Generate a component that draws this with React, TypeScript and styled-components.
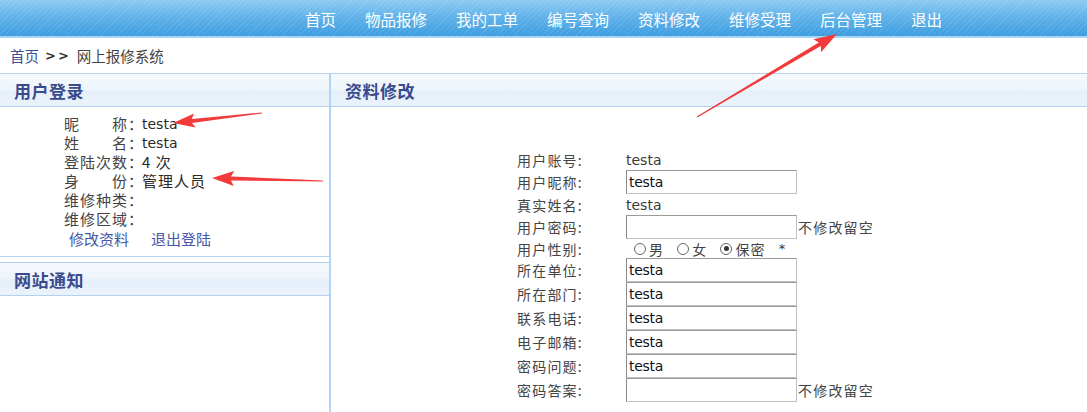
import React from "react";
import styled, { createGlobalStyle } from "styled-components";

type Point = [number, number];

const GlobalStyle = createGlobalStyle`
  html, body {
    margin: 0;
    padding: 0;
    background: #fff;
  }
  body {
    font-family: "Noto Sans CJK SC", "Noto Sans", sans-serif;
    font-size: 14px;
    color: #444;
  }
`;

const Page = styled.div`
  position: relative;
  width: 1087px;
  height: 412px;
  overflow: hidden;
`;

const NavBar = styled.div`
  height: 38px;
  box-sizing: border-box;
  border-bottom: 2px solid #a6d6f4;
  background:
    repeating-linear-gradient(
      135deg,
      rgba(255, 255, 255, 0.09) 0px,
      rgba(255, 255, 255, 0.09) 1px,
      rgba(255, 255, 255, 0) 1px,
      rgba(255, 255, 255, 0) 4px
    ),
    linear-gradient(#8ccbf2 0%, #62b3ea 45%, #3d9de0 100%);
  display: flex;
  align-items: center;
  padding-left: 305px;
  gap: 29px;
`;

const NavItem = styled.a`
  color: #fff;
  font-size: 15.5px;
  line-height: 20px;
  text-decoration: none;
  padding-top: 2px;
`;

const Crumb = styled.div`
  height: 35px;
  display: flex;
  align-items: center;
  padding-left: 10px;
  font-size: 14.5px;
  color: #444;
  gap: 6px;
`;

const CrumbLink = styled.span`
  color: #3b4c92;
`;

const CrumbSep = styled.span`
  font-family: "DejaVu Sans", sans-serif;
  font-weight: bold;
  font-size: 13px;
  color: #333;
  letter-spacing: 2px;
`;

const Main = styled.div`
  display: flex;
  height: 339px;
`;

const Side = styled.div`
  width: 329px;
  flex-shrink: 0;
  border-right: 2px solid #b4d4f3;
`;

const Content = styled.div`
  flex: 1;
`;

const Panel = styled.div<{ $spaced?: boolean }>`
  margin-top: ${(p) => (p.$spaced ? "5px" : "0")};
`;

const PanelHead = styled.div`
  height: 34px;
  box-sizing: border-box;
  border-top: 1px solid #b5d1ee;
  border-bottom: 1px solid #b5d1ee;
  background: linear-gradient(#f5f9fd 0%, #eff5fc 50%, #e6f0fa 52%, #eaf2fb 100%);
  display: flex;
  align-items: center;
  padding-left: 14px;
  font-size: 17px;
  font-weight: 700;
  color: #3a4a8c;
  letter-spacing: 0.5px;
`;

const InfoList = styled.div`
  padding: 7px 0 7px 64px;
  border-bottom: 1px solid #b5d1ee;
`;

const InfoRow = styled.div`
  display: flex;
  height: 19px;
  align-items: center;
  font-size: 15px;
  color: #444;
`;

const InfoLabel = styled.span`
  width: 78px;
  letter-spacing: 1px;
  white-space: pre;
`;

const InfoValue = styled.span<{ $latin?: boolean }>`
  font-family: ${(p) =>
    p.$latin ? '"DejaVu Sans", sans-serif' : '"Noto Sans CJK SC", sans-serif'};
  font-size: ${(p) => (p.$latin ? "14px" : "15px")};
  color: #2a2a2a;
  letter-spacing: ${(p) => (p.$latin ? "0" : "1px")};
`;

const LinkRow = styled.div`
  display: flex;
  gap: 22px;
  padding-left: 5px;
  height: 21px;
  align-items: center;
`;

const SideLink = styled.a`
  color: #4656a8;
  font-size: 15px;
  text-decoration: none;
`;

const Form = styled.div`
  display: grid;
  grid-template-columns: 109px auto;
  justify-content: start;
  padding: 42px 0 0 186px;
`;

const Label = styled.div<{ $h: number }>`
  height: ${(p) => p.$h}px;
  display: flex;
  align-items: center;
  font-size: 14px;
  letter-spacing: 1.2px;
  color: #444;
`;

const Field = styled.div<{ $h: number }>`
  height: ${(p) => p.$h}px;
  display: flex;
  align-items: center;
`;

const PlainValue = styled.span`
  font-family: "DejaVu Sans", sans-serif;
  font-size: 14px;
  color: #3a3a3a;
`;

const TextBox = styled.input`
  width: 171px;
  height: 24px;
  box-sizing: border-box;
  margin: 0;
  padding: 0 2px;
  border: 1px solid #c2c2c2;
  border-top-color: #9a9a9a;
  border-left-color: #8a8a8a;
  font-family: "DejaVu Sans", sans-serif;
  font-size: 14px;
  letter-spacing: -0.3px;
  color: #111;
  background: #fff;
  outline: none;
`;

const Hint = styled.span`
  margin-left: 1px;
  font-size: 14px;
  letter-spacing: 1.2px;
  color: #444;
`;

const RadioGroup = styled.div`
  display: flex;
  align-items: center;
  padding-left: 8px;
`;

const RadioOption = styled.label`
  display: flex;
  align-items: center;
  gap: 3px;
  margin-right: 13px;
  font-size: 14px;
  letter-spacing: 1.2px;
  color: #444;
`;

const Radio = styled.input`
  appearance: none;
  margin: 0;
  width: 12px;
  height: 12px;
  box-sizing: border-box;
  border: 1px solid #666;
  border-radius: 50%;
  background: #fff;
  position: relative;
  &:checked::after {
    content: "";
    position: absolute;
    left: 2.5px;
    top: 2.5px;
    width: 5px;
    height: 5px;
    border-radius: 50%;
    background: #333;
  }
`;

const Star = styled.span`
  font-family: "DejaVu Sans", sans-serif;
  font-size: 13px;
  color: #333;
`;

const Overlay = styled.svg`
  position: absolute;
  left: 0;
  top: 0;
  pointer-events: none;
`;

const navItems = ["首页", "物品报修", "我的工单", "编号查询", "资料修改", "维修受理", "后台管理", "退出"];

// tapered red annotation arrow: thin tail, wide head
function arrowPoints(tail: Point, tip: Point, headLen = 18, headW = 15, shaftW = 5, tailW = 1): string {
  const dx = tip[0] - tail[0];
  const dy = tip[1] - tail[1];
  const len = Math.hypot(dx, dy);
  const ux = dx / len;
  const uy = dy / len;
  const nx = -uy;
  const ny = ux;
  const bx = tip[0] - ux * headLen;
  const by = tip[1] - uy * headLen;
  const pts: Point[] = [
    [tail[0] + nx * tailW / 2, tail[1] + ny * tailW / 2],
    [bx + nx * shaftW / 2, by + ny * shaftW / 2],
    [bx - ux * 3 + nx * headW / 2, by - uy * 3 + ny * headW / 2],
    tip,
    [bx - ux * 3 - nx * headW / 2, by - uy * 3 - ny * headW / 2],
    [bx - nx * shaftW / 2, by - ny * shaftW / 2],
    [tail[0] - nx * tailW / 2, tail[1] - ny * tailW / 2],
  ];
  return pts.map((p) => `${p[0].toFixed(1)},${p[1].toFixed(1)}`).join(" ");
}

const textRows = [
  { label: "用户账号:", kind: "plain", value: "testa" },
  { label: "用户昵称:", kind: "input", value: "testa" },
  { label: "真实姓名:", kind: "plain", value: "testa" },
  { label: "用户密码:", kind: "input", value: "", hint: "不修改留空" },
  { label: "用户性别:", kind: "radio", value: "" },
  { label: "所在单位:", kind: "input", value: "testa" },
  { label: "所在部门:", kind: "input", value: "testa" },
  { label: "联系电话:", kind: "input", value: "testa" },
  { label: "电子邮箱:", kind: "input", value: "testa" },
  { label: "密码问题:", kind: "input", value: "testa" },
  { label: "密码答案:", kind: "input", value: "", hint: "不修改留空" },
];

const rowHeight = (kind: string) => (kind === "input" ? 24 : kind === "radio" ? 19 : 21);

const App = () => {
  return (
    <Page>
      <GlobalStyle />
      <NavBar>
        {navItems.map((item) => (
          <NavItem key={item} href="#">
            {item}
          </NavItem>
        ))}
      </NavBar>
      <Crumb>
        <CrumbLink>首页</CrumbLink>
        <CrumbSep>&gt;&gt;</CrumbSep>
        <span>网上报修系统</span>
      </Crumb>
      <Main>
        <Side>
          <Panel>
            <PanelHead>用户登录</PanelHead>
            <InfoList>
              <InfoRow>
                <InfoLabel>昵　　称：</InfoLabel>
                <InfoValue $latin>testa</InfoValue>
              </InfoRow>
              <InfoRow>
                <InfoLabel>姓　　名：</InfoLabel>
                <InfoValue $latin>testa</InfoValue>
              </InfoRow>
              <InfoRow>
                <InfoLabel>登陆次数：</InfoLabel>
                <InfoValue>4 次</InfoValue>
              </InfoRow>
              <InfoRow>
                <InfoLabel>身　　份：</InfoLabel>
                <InfoValue>管理人员</InfoValue>
              </InfoRow>
              <InfoRow>
                <InfoLabel>维修种类：</InfoLabel>
              </InfoRow>
              <InfoRow>
                <InfoLabel>维修区域：</InfoLabel>
              </InfoRow>
              <LinkRow>
                <SideLink href="#">修改资料</SideLink>
                <SideLink href="#">退出登陆</SideLink>
              </LinkRow>
            </InfoList>
          </Panel>
          <Panel $spaced>
            <PanelHead>网站通知</PanelHead>
          </Panel>
        </Side>
        <Content>
          <PanelHead>资料修改</PanelHead>
          <Form>
            {textRows.map((row) => {
              const h = rowHeight(row.kind);
              return (
                <React.Fragment key={row.label}>
                  <Label $h={h}>{row.label}</Label>
                  <Field $h={h}>
                    {row.kind === "plain" && <PlainValue>{row.value}</PlainValue>}
                    {row.kind === "input" && (
                      <>
                        <TextBox type="text" defaultValue={row.value} />
                        {row.hint && <Hint>{row.hint}</Hint>}
                      </>
                    )}
                    {row.kind === "radio" && (
                      <RadioGroup>
                        <RadioOption>
                          <Radio type="radio" name="sex" />男
                        </RadioOption>
                        <RadioOption>
                          <Radio type="radio" name="sex" />女
                        </RadioOption>
                        <RadioOption>
                          <Radio type="radio" name="sex" defaultChecked />保密
                        </RadioOption>
                        <Star>*</Star>
                      </RadioGroup>
                    )}
                  </Field>
                </React.Fragment>
              );
            })}
          </Form>
        </Content>
      </Main>
      <Overlay width="1087" height="412" viewBox="0 0 1087 412">
        <polygon fill="#f23a3a" points={arrowPoints([262, 113], [173, 123], 19, 14, 4, 1)} />
        <polygon fill="#f23a3a" points={arrowPoints([323, 181], [212, 178], 19, 15, 4, 1)} />
        <polygon fill="#f23a3a" points={arrowPoints([697, 117], [837, 34], 20, 15, 4, 1)} />
      </Overlay>
    </Page>
  );
};

export default App;
